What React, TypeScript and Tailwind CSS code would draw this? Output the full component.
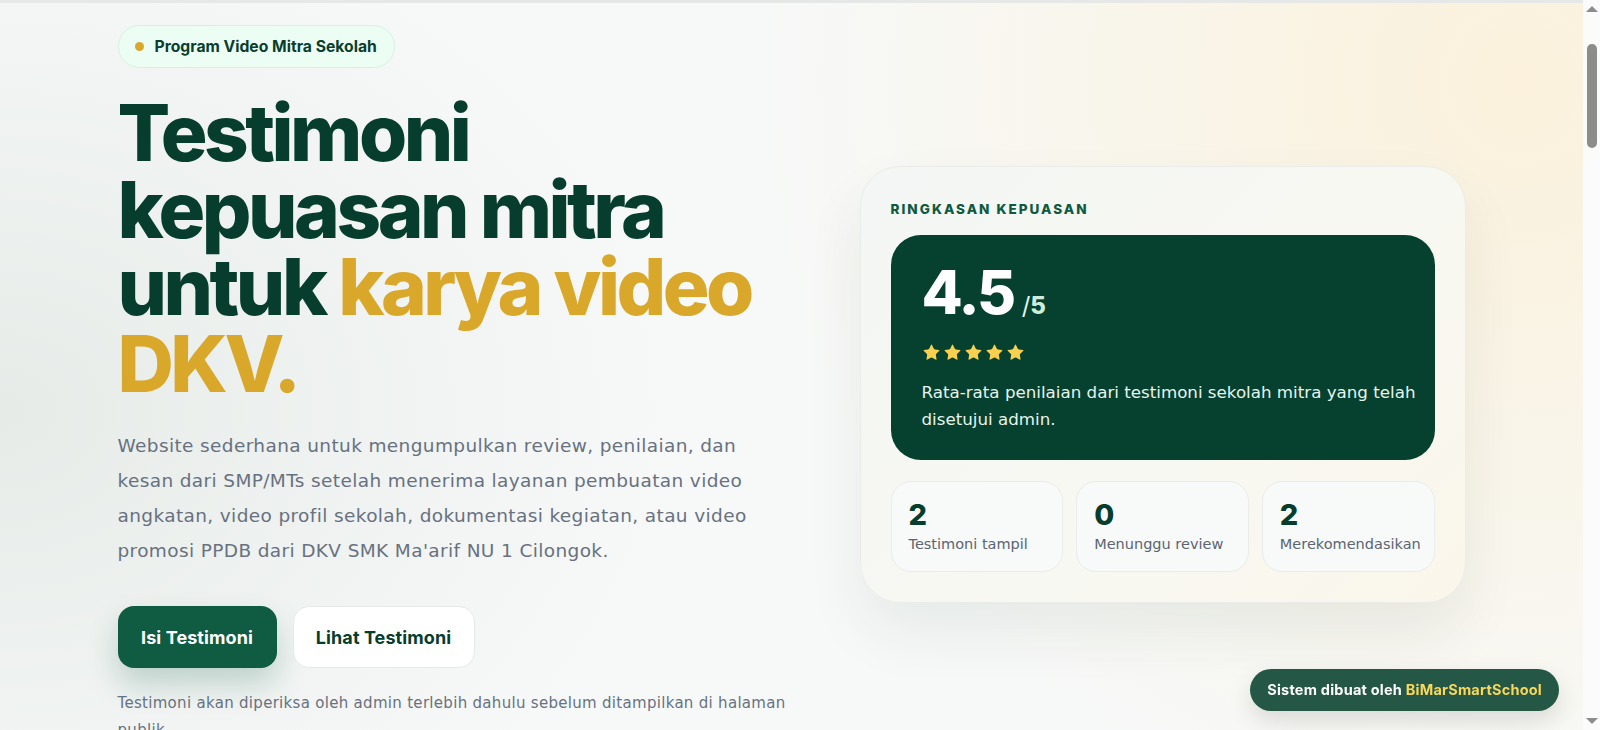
import { Star } from 'lucide-react'

const HEAD = { fontFamily: 'Inter, "Noto Sans", sans-serif' }
const BODY = { fontFamily: '"DejaVu Sans", "Noto Sans", sans-serif' }

const STATS = [
  { value: '2', label: 'Testimoni tampil' },
  { value: '0', label: 'Menunggu review' },
  { value: '2', label: 'Merekomendasikan' },
]

function FakeScrollbar() {
  // classic browser scrollbar seen at the right edge of the shot
  return (
    <div className="fixed right-0 top-0 flex h-screen w-[17px] flex-col items-center bg-[#fbfbfb]">
      <span className="mt-[6px] h-0 w-0 border-x-[6px] border-b-[6px] border-x-transparent border-b-[#8c8c8c]" />
      <span className="mt-[32px] h-[104px] w-[10px] rounded-full bg-[#8c8c8c]" />
      <span className="mt-auto mb-[6px] h-0 w-0 border-x-[6px] border-t-[6px] border-x-transparent border-t-[#8c8c8c]" />
    </div>
  )
}

function SummaryCard() {
  return (
    <div className="rounded-[40px] border border-[#e9ece8] bg-[linear-gradient(135deg,#f3f6f4_0%,#f8f8f2_60%,#faf6ea_100%)] p-[30px] shadow-[0_30px_60px_rgba(20,40,30,0.07)]">
      <p style={HEAD} className="mt-[2px] text-[13.5px] font-extrabold uppercase tracking-[0.15em] text-[#0d5a40]">
        Ringkasan Kepuasan
      </p>
      <div className="mt-[16px] rounded-[30px] bg-[#06402f] pb-[27px] pl-[31px] pr-[20px] pt-[27px]">
        <div style={HEAD} className="flex items-baseline gap-[8px]">
          <span className="text-[60px] font-extrabold leading-none tracking-[-0.04em] text-white">4.5</span>
          <span className="text-[24px] font-extrabold text-[#cdeedd]">
            <span className="font-normal text-[#e3f6ec]">/</span>5
          </span>
        </div>
        <div className="mt-[19px] flex gap-[2px] text-[#f8d04e]">
          {Array.from({ length: 5 }).map((_, i) => (
            <Star key={i} size={19} fill="currentColor" strokeWidth={0} />
          ))}
        </div>
        <p style={BODY} className="mt-[17px] whitespace-nowrap text-[16.7px] leading-[27px] text-[#e6f4ec]">
          Rata-rata penilaian dari testimoni sekolah mitra yang telah
          <br />
          disetujui admin.
        </p>
      </div>
      <div className="mt-[21px] grid grid-cols-3 gap-[13px]">
        {STATS.map((s) => (
          <div
            key={s.label}
            className="flex h-[91px] flex-col justify-center rounded-[20px] border border-[#e9ecea] bg-[#f8faf9] px-[17px]"
          >
            <span style={HEAD} className="text-[29px] font-extrabold leading-[34px] text-[#063d2c]">
              {s.value}
            </span>
            <span style={BODY} className="mt-[2px] text-[14.5px] text-[#5b6472]">
              {s.label}
            </span>
          </div>
        ))}
      </div>
    </div>
  )
}

export default function App() {
  return (
    <div
      style={HEAD}
      className="min-h-screen bg-[#f7f9f8] bg-[radial-gradient(ellipse_at_95%_5%,#fbf1dc_0%,rgba(251,241,220,0)_35%),radial-gradient(ellipse_at_0%_25%,#e6ebe8_0%,rgba(230,235,232,0)_30%)] pr-[17px]"
    >
      <div className="h-[3px] bg-[#e6e8e8]" />
      <main className="mx-auto grid w-full max-w-[1348px] grid-cols-[1fr_606px] items-center gap-[60px] pt-[22px]">
        {/* Hero copy */}
        <section>
          <div className="inline-flex h-[43px] items-center gap-[11px] rounded-full border border-[#d3f3e2] bg-[#ecfdf4] pl-[16px] pr-[17px]">
            <span className="h-[9px] w-[9px] rounded-full bg-[#d9a82a]" />
            <span className="text-[15.7px] font-bold text-[#0a3d2c]">Program Video Mitra Sekolah</span>
          </div>
          <h1 className="mt-[26px] text-[78px] font-extrabold leading-[77px] tracking-[-0.045em] text-[#063d2c]">
            Testimoni
            <br />
            kepuasan mitra
            <br />
            untuk <span className="text-[#d9a82a]">karya video</span>
            <br />
            <span className="text-[#d9a82a]">DKV.</span>
          </h1>
          <p style={BODY} className="mt-[26px] text-[18.5px] leading-[35px] tracking-[0.02em] text-[#687180]">
            Website sederhana untuk mengumpulkan review, penilaian, dan
            <br />
            kesan dari SMP/MTs setelah menerima layanan pembuatan video
            <br />
            angkatan, video profil sekolah, dokumentasi kegiatan, atau video
            <br />
            promosi PPDB dari DKV SMK Ma'arif NU 1 Cilongok.
          </p>
          <div className="mt-[38px] flex gap-[16px]">
            <button className="h-[62px] w-[159px] rounded-[16px] bg-[#0f5c43] text-[18px] font-bold tracking-[0.005em] text-white shadow-[0_16px_30px_rgba(15,92,67,0.22)]">
              Isi Testimoni
            </button>
            <button className="h-[62px] w-[182px] rounded-[16px] border border-[#e5e9e7] bg-white text-[18px] font-bold tracking-[0.005em] text-[#063d2c]">
              Lihat Testimoni
            </button>
          </div>
          <p style={BODY} className="mt-[22px] whitespace-nowrap text-[15px] leading-[27px] tracking-[0.02em] text-[#687180]">
            Testimoni akan diperiksa oleh admin terlebih dahulu sebelum ditampilkan di halaman
            <br />
            publik.
          </p>
        </section>

        {/* Summary */}
        <SummaryCard />
      </main>
      <div className="h-[900px]" />

      <div className="fixed bottom-[19px] right-[41px] flex h-[42px] items-center rounded-full bg-[#245745] px-[17px] text-[14.5px] font-bold tracking-[0.015em] text-white shadow-[0_10px_25px_rgba(0,0,0,0.12)]">
        Sistem dibuat oleh&nbsp;<span className="text-[#f9d65c]">BiMarSmartSchool</span>
      </div>
      <FakeScrollbar />
    </div>
  )
}
